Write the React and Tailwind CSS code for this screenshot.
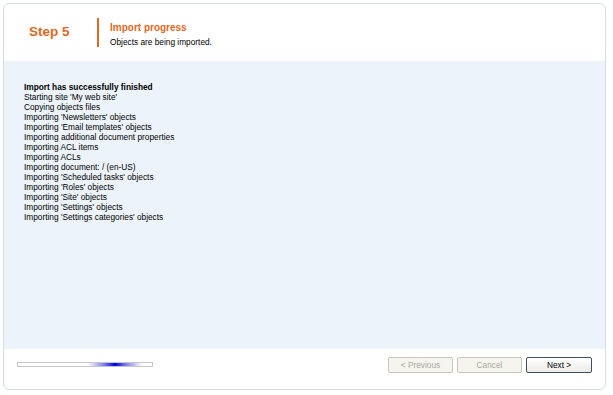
import React from 'react';

const LOG = [
  "Starting site 'My web site'",
  'Copying objects files',
  "Importing 'Newsletters' objects",
  "Importing 'Email templates' objects",
  'Importing additional document properties',
  'Importing ACL items',
  'Importing ACLs',
  'Importing document: / (en-US)',
  "Importing 'Scheduled tasks' objects",
  "Importing 'Roles' objects",
  "Importing 'Site' objects",
  "Importing 'Settings' objects",
  "Importing 'Settings categories' objects",
];

export default function App() {
  return (
    <div className="w-[613px] h-[395px] bg-white pt-[3px] pl-[3px] font-['Liberation_Sans',Arial,sans-serif]">
      <div className="w-[603px] h-[387px] flex flex-col border border-[#d3dde6] rounded-[6px] overflow-hidden bg-white">
        {/* Header */}
        <div className="h-[57px] flex items-center shrink-0">
          <div className="w-[93px] pl-[25px] text-[13.5px] font-bold text-[#e3671e]">Step 5</div>
          <div className="w-[2px] h-[29px] bg-[#e3671e]" />
          <div className="pl-[11px] pt-[4px]">
            <div className="text-[10px] leading-[14px] font-bold text-[#e3671e]">Import progress</div>
            <div className="text-[8.3px] leading-[14px] text-black">Objects are being imported.</div>
          </div>
        </div>

        {/* Log */}
        <div className="h-[288px] bg-[#ecf3fa] pl-[20px] pt-[21px] text-[8.3px] leading-[10px] text-black shrink-0">
          <div className="font-bold">Import has successfully finished</div>
          {LOG.map((line) => (
            <div key={line}>{line}</div>
          ))}
        </div>

        {/* Footer */}
        <div className="flex-1 flex items-start pt-[8px] pl-[13px] pr-[13px]">
          <div className="mt-[5px] w-[136px] h-[5px] border border-[#c6c6c6] bg-white relative overflow-hidden">
            <div className="absolute top-0 bottom-0 left-[70px] w-[54px] bg-[linear-gradient(to_right,rgba(40,40,230,0),rgba(40,40,230,0.6)_30%,#0000d8_50%,rgba(40,40,230,0.6)_70%,rgba(40,40,230,0))]" />
          </div>
          <div className="ml-auto flex gap-[4px]">
            <button className="w-[65px] h-[16px] border border-[#cbc8bb] rounded-[2px] bg-[#f5f4ef] text-[8.3px] text-[#aca899] leading-none">
              &lt; Previous
            </button>
            <button className="w-[65px] h-[16px] border border-[#cbc8bb] rounded-[2px] bg-[#f5f4ef] text-[8.3px] text-[#aca899] leading-none">
              Cancel
            </button>
            <button className="w-[66px] h-[16px] border border-[#3d4f63] rounded-[2px] bg-[linear-gradient(to_bottom,#ffffff,#ecebe6)] text-[8.3px] text-black leading-none">
              Next &gt;
            </button>
          </div>
        </div>
      </div>
    </div>
  );
}
